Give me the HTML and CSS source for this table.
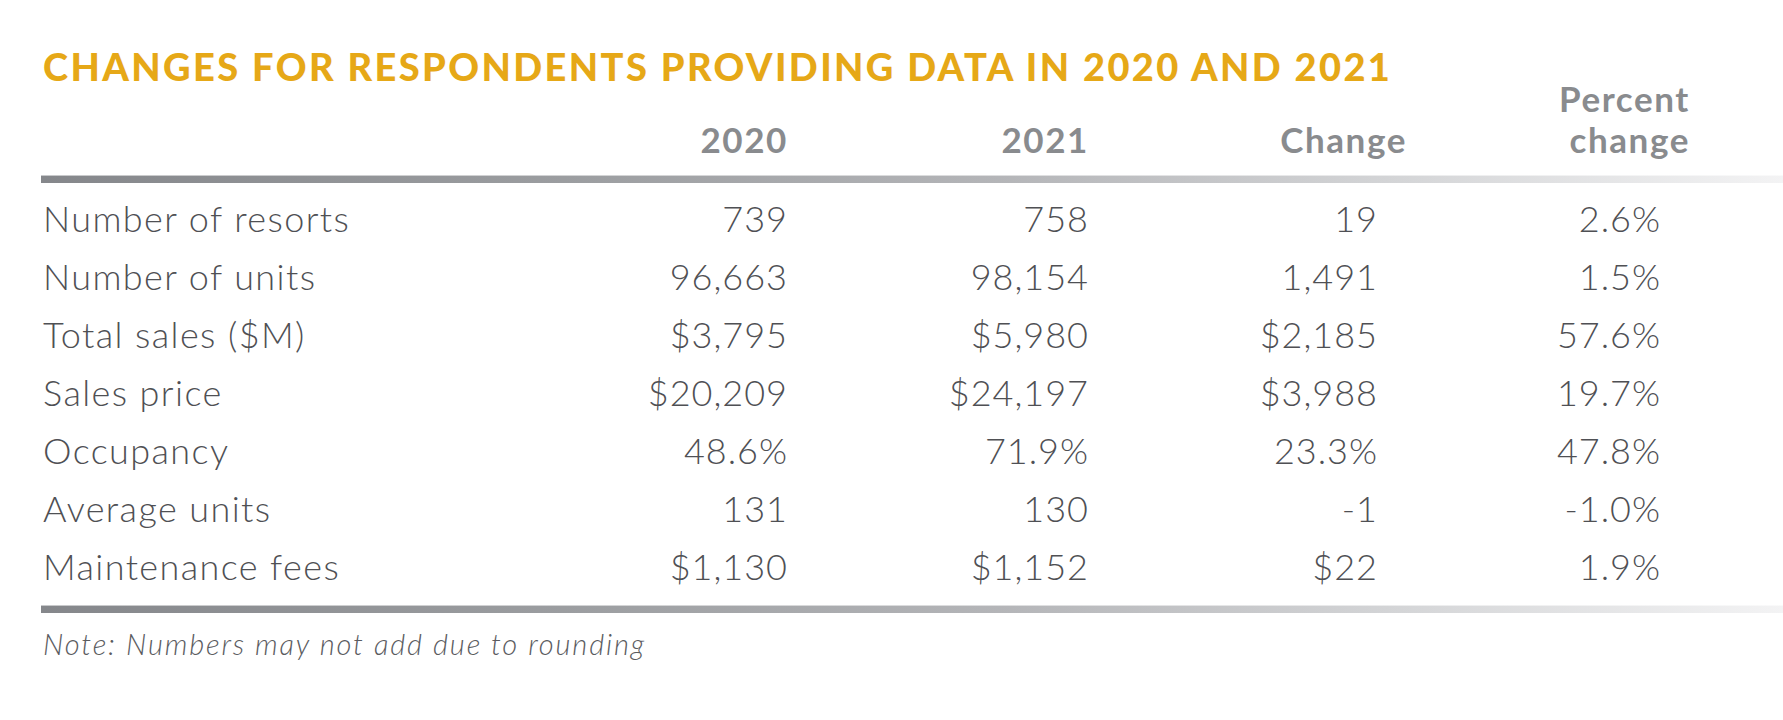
FILE: index.html
```html
<!DOCTYPE html>
<html lang="en">
<head>
<meta charset="utf-8">
<title>Changes for respondents providing data in 2020 and 2021</title>
<link rel="stylesheet" href="styles.css">
</head>
<body>
<div class="page">
  <h1 class="title">CHANGES FOR RESPONDENTS PROVIDING DATA IN 2020 AND 2021</h1>
  <div class="grid">
    <div class="hd"></div>
    <div class="hd">2020</div>
    <div class="hd">2021</div>
    <div class="hd">Change</div>
    <div class="hd">Percent<br>change</div>
    <div class="hd"></div>
    <div class="rule rule-top"></div>

    <div class="lbl">Number of resorts</div><div class="num">739</div><div class="num">758</div><div class="num pad">19</div><div class="num pad">2.6%</div><div class="fill"></div>
    <div class="lbl">Number of units</div><div class="num">96,663</div><div class="num">98,154</div><div class="num pad">1,491</div><div class="num pad">1.5%</div><div class="fill"></div>
    <div class="lbl">Total sales ($M)</div><div class="num">$3,795</div><div class="num">$5,980</div><div class="num pad">$2,185</div><div class="num pad">57.6%</div><div class="fill"></div>
    <div class="lbl">Sales price</div><div class="num">$20,209</div><div class="num">$24,197</div><div class="num pad">$3,988</div><div class="num pad">19.7%</div><div class="fill"></div>
    <div class="lbl">Occupancy</div><div class="num">48.6%</div><div class="num">71.9%</div><div class="num pad">23.3%</div><div class="num pad">47.8%</div><div class="fill"></div>
    <div class="lbl">Average units</div><div class="num">131</div><div class="num">130</div><div class="num pad">-1</div><div class="num pad">-1.0%</div><div class="fill"></div>
    <div class="lbl">Maintenance fees</div><div class="num">$1,130</div><div class="num">$1,152</div><div class="num pad">$22</div><div class="num pad">1.9%</div><div class="fill"></div>

    <div class="rule rule-bottom"></div>
  </div>
  <p class="note">Note: Numbers may not add due to rounding</p>
</div>
</body>
</html>
```
FILE: styles.css
```css
html, body {
  margin: 0;
  padding: 0;
  background: #ffffff;
}

.page {
  padding: 44px 0 0 41px;
  font-family: "Lato", "Liberation Sans", sans-serif;
}

.title {
  margin: 0 0 -10px 2px;
  font-family: "Lato", "Liberation Sans", sans-serif;
  font-weight: 900;
  font-size: 38px;
  line-height: 44px;
  letter-spacing: 2.4px;
  color: #e6a817;
  white-space: nowrap;
}

.grid {
  display: grid;
  grid-template-columns: 547px 200px 301px 318px 283px 1fr;
  align-items: end;
}

.hd {
  font-weight: 700;
  font-size: 35px;
  line-height: 41px;
  letter-spacing: 1.6px;
  color: #898b8e;
  text-align: right;
}

.rule {
  grid-column: 1 / -1;
  height: 8px;
  background:
    linear-gradient(to bottom, rgba(255, 255, 255, 0.55) 0, rgba(255, 255, 255, 0.55) 1px, rgba(255, 255, 255, 0) 1px),
    linear-gradient(to right, #85878b 0%, #9b9da0 30%, #b4b5b8 55%, #d4d5d7 78%, #f3f3f4 100%);
}

.rule-top {
  margin-top: 15px;
  margin-bottom: 6px;
}

.rule-bottom {
  margin-top: 10px;
}

.lbl,
.num {
  font-weight: 300;
  font-size: 36px;
  line-height: 58px;
  color: #4f5054;
  white-space: nowrap;
}

.lbl {
  padding-left: 2px;
  letter-spacing: 1.4px;
}

.num {
  text-align: right;
  letter-spacing: 1px;
}

.num.pad {
  padding-right: 29px;
}

.note {
  margin: 14px 0 0 2px;
  font-weight: 300;
  font-style: italic;
  font-size: 29px;
  line-height: 34px;
  color: #5b5c5f;
  letter-spacing: 1.85px;
}
```
